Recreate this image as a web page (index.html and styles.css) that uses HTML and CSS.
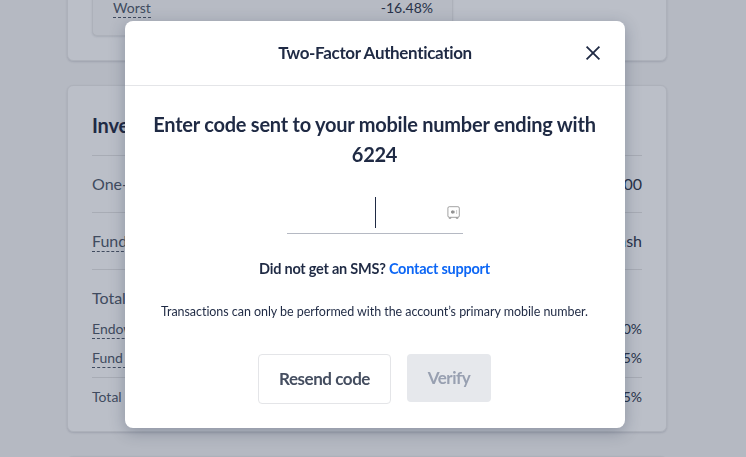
FILE: index.html
```html
<!DOCTYPE html>
<html lang="en">
<head>
    <meta charset="UTF-8">
    <meta name="viewport" content="width=device-width, initial-scale=1.0">
    <title>Two-Factor Authentication</title>
    <link rel="stylesheet" href="styles.css">
</head>
<body>
    <!-- Page behind the dialog -->
    <main class="page">
        <section class="card card-returns">
            <div class="scenario">
                <span class="label hint">Worst</span>
                <span class="value">-16.48%</span>
            </div>
        </section>

        <section class="card">
            <h2 class="card-title">Investment</h2>
            <div class="row">
                <span class="label">One-time</span>
                <span class="value">10,000</span>
            </div>
            <div class="row">
                <span class="label hint">Funding</span>
                <span class="value">Cash</span>
            </div>
            <div class="fees">
                <div class="label fees-title">Total fees</div>
                <div class="fee">
                    <span class="label hint">Endowus Fee</span>
                    <span class="value">0.60%</span>
                </div>
                <div class="fee">
                    <span class="label hint">Fund fees</span>
                    <span class="value">0.55%</span>
                </div>
                <div class="fee fee-total">
                    <span class="label">Total</span>
                    <span class="value">1.15%</span>
                </div>
            </div>
        </section>

        <section class="card"></section>
    </main>

    <!-- Two-factor dialog -->
    <div class="overlay">
        <div class="modal" role="dialog" aria-modal="true">
            <div class="modal-header">
                <div class="modal-title">Two-Factor Authentication</div>
                <button class="close-btn" aria-label="Close">
                    <svg width="16" height="16" viewBox="0 0 16 16" fill="none" stroke="currentColor" stroke-width="1.8">
                        <path d="M1.6 1.6 14.4 14.4M14.4 1.6 1.6 14.4"/>
                    </svg>
                </button>
            </div>
            <div class="modal-body">
                <h1 class="prompt">Enter code sent to your mobile number ending with 6224</h1>
                <div class="code-field">
                    <span class="caret"></span>
                    <svg class="autofill-icon" width="13" height="13" viewBox="0 0 13 13" fill="none" stroke="#8a8a8a">
                        <rect x="0.9" y="0.7" width="11.4" height="10.6" rx="1.4" stroke-width="0.8"/>
                        <path d="M2.2 11.4v1h1.6v-1M9.3 11.4v1h1.6v-1" stroke-width="0.8"/>
                        <rect x="4" y="4.8" width="3.6" height="2.4" fill="#999" stroke="none"/>
                        <path d="M5.8 4v4" stroke-width="0.7"/>
                        <path d="M9.6 4v4" stroke="#ccc" stroke-width="1"/>
                    </svg>
                </div>
                <p class="support">Did not get an SMS? <a class="support-link" href="#">Contact support</a></p>
                <p class="note">Transactions can only be performed with the account’s primary mobile number.</p>
                <div class="actions">
                    <button class="btn btn-outline">Resend code</button>
                    <button class="btn btn-primary" disabled>Verify</button>
                </div>
            </div>
        </div>
    </div>
</body>
</html>
```

FILE: styles.css
```css
* {
    box-sizing: border-box;
}

body {
    margin: 0;
    height: 100vh;
    overflow: hidden;
    font-family: Lato, sans-serif;
    font-size: 16px;
    font-variant-ligatures: none;
    color: #1f2a44;
    background-color: #b5b9c2;
}

h1, h2, p {
    margin: 0;
}

/* Page content */
.page {
    display: flex;
    flex-direction: column;
    gap: 24px;
    width: 604px;
    height: 100vh;
    margin-left: 65px;
    padding: 0 2px;
    overflow: hidden;
}

.card {
    flex-shrink: 0;
    min-height: 60px;
    padding: 24px;
    background-color: #bbbfc8;
    border: 1px solid #adb1ba;
    border-radius: 6px;
    box-shadow: 0 1px 2px rgba(31, 42, 68, 0.15);
}

.card-returns {
    margin-top: -51px;
}

.scenario {
    display: flex;
    justify-content: space-between;
    width: 361px;
    padding: 23px 19px 17px 20px;
    font-size: 14px;
    line-height: 19px;
    background-color: #b7bbc4;
    border: 1px solid #adb1ba;
    border-radius: 5px;
    box-shadow: 0 1px 2px rgba(31, 42, 68, 0.12);
}

.label {
    color: #404b5f;
}

.value {
    color: #283249;
}

.hint {
    border-bottom: 1px dashed #404b5f;
}

.card-title {
    height: 46px;
    font-size: 20px;
    font-weight: 700;
    line-height: 30px;
    letter-spacing: -0.2px;
    border-bottom: 1px solid #a8acb5;
}

.row {
    display: flex;
    justify-content: space-between;
    align-items: center;
    height: 57px;
    line-height: 20px;
    border-bottom: 1px solid #a8acb5;
}

.fees-title {
    margin-top: 17px;
    line-height: 22px;
}

.fee {
    display: flex;
    justify-content: space-between;
    margin-top: 10px;
    font-size: 14px;
    line-height: 18px;
}

.fees-title + .fee {
    margin-top: 11px;
}

.fee-total {
    margin-top: 9px;
    padding: 10px 0 1px;
    border-top: 1px solid #a8acb5;
}

/* Dialog */
.overlay {
    position: fixed;
    inset: 0;
    padding-top: 21px;
}

.modal {
    width: 500px;
    height: 407px;
    margin-left: 125px;
    background-color: #fff;
    border-radius: 8px;
    box-shadow: 0 4px 16px rgba(31, 42, 68, 0.3);
}

.modal-header {
    display: grid;
    grid-template-columns: 32px 1fr 32px;
    align-items: center;
    height: 65px;
    padding: 0 16px;
    border-bottom: 1px solid #e4e5e8;
}

.modal-title {
    grid-column: 2;
    padding-bottom: 1px;
    font-size: 17px;
    font-weight: 700;
    letter-spacing: -0.34px;
    text-align: center;
}

.close-btn {
    display: flex;
    justify-content: center;
    padding: 0;
    color: #1f2a44;
    background: none;
    border: none;
    cursor: pointer;
}

.modal-body {
    display: flex;
    flex-direction: column;
    align-items: center;
    padding: 23px 25px 0 24px;
    text-align: center;
}

.prompt {
    font-size: 20px;
    font-weight: 700;
    line-height: 30px;
    letter-spacing: -0.24px;
}

.code-field {
    display: grid;
    grid-template-columns: 88px 1px 1fr;
    align-items: center;
    width: 176px;
    height: 43px;
    margin-top: 22px;
    padding-right: 3px;
    border-bottom: 1px solid #b5b9c3;
}

.caret {
    grid-column: 2;
    height: 31px;
    background-color: #1f2a44;
}

.autofill-icon {
    justify-self: end;
}

.support {
    margin-top: 25px;
    font-size: 14.5px;
    font-weight: 700;
    line-height: 20px;
    letter-spacing: -0.24px;
}

.support-link {
    color: #0c66f5;
    text-decoration: none;
}

.note {
    margin-top: 24px;
    font-size: 12.5px;
    line-height: 18px;
    letter-spacing: -0.05px;
}

.actions {
    display: flex;
    align-items: flex-start;
    gap: 16px;
    margin-top: 33px;
}

.btn {
    width: 84px;
    height: 48px;
    padding: 0 0 2px;
    font-family: inherit;
    font-size: 17px;
    font-weight: 700;
    letter-spacing: -0.45px;
    border: none;
    border-radius: 4px;
    cursor: pointer;
}

.btn-outline {
    width: 133px;
    height: 50px;
    color: #454e60;
    background-color: #fff;
    border: 1px solid #e4e5e8;
}

.btn-primary {
    color: #98a0b1;
    background-color: #e6e8ec;
}
```
